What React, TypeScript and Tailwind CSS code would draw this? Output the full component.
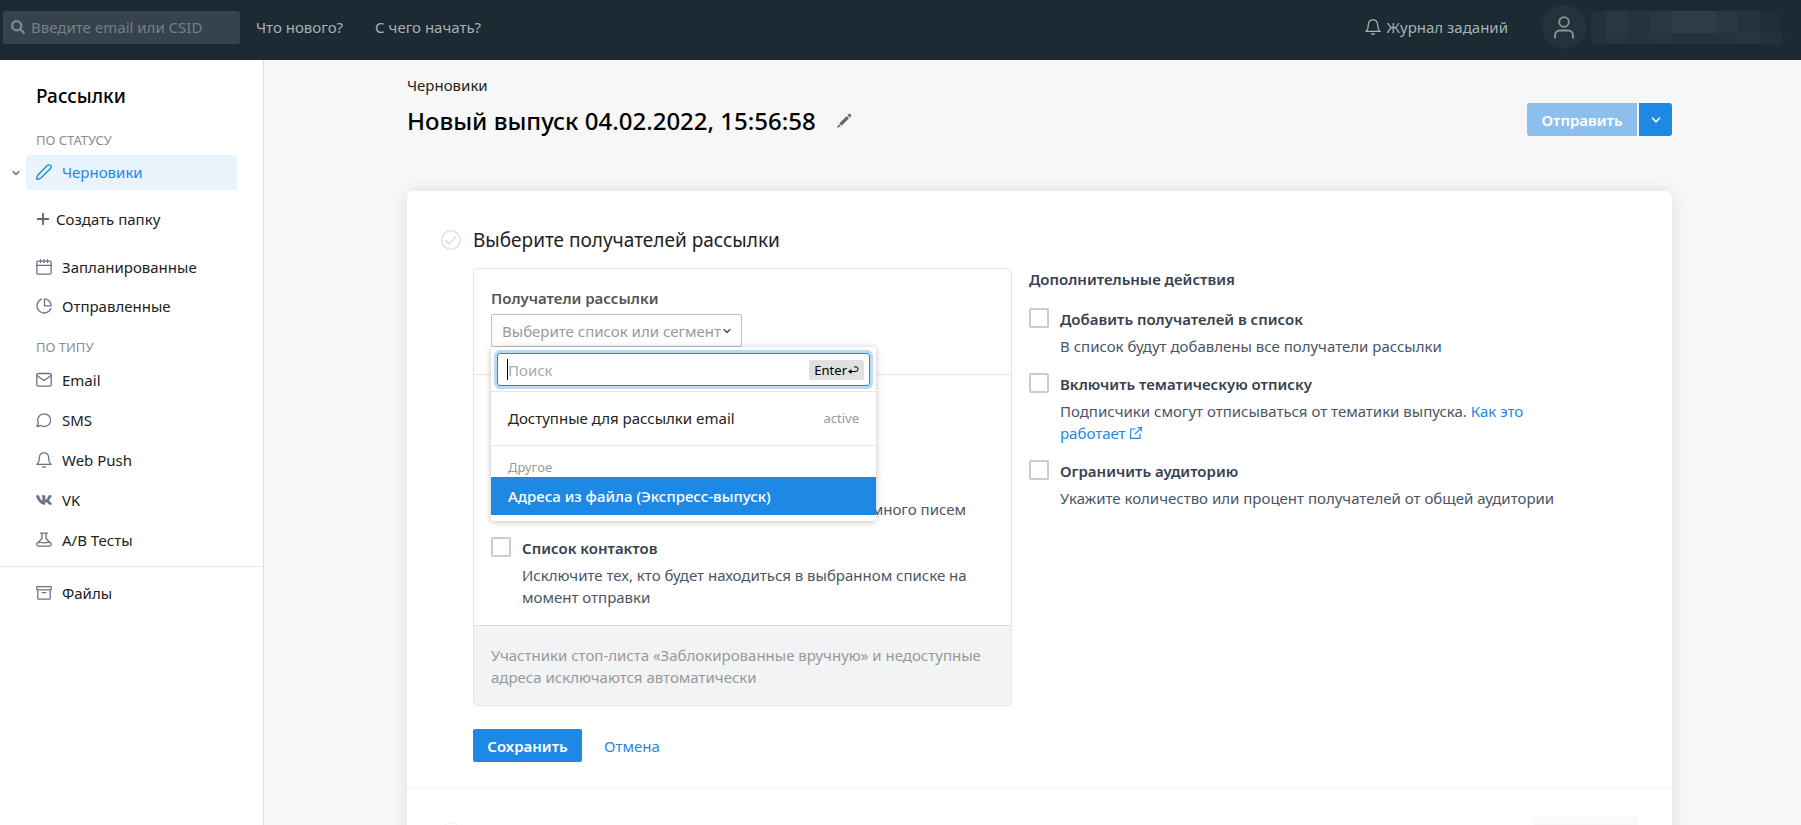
import React from 'react';
import { ChevronDown, Plus } from 'lucide-react';
import { FaSearch } from 'react-icons/fa';

type IconProps = { className?: string };

const svgProps = {
  viewBox: '0 0 16 16',
  fill: 'none',
  stroke: 'currentColor',
  strokeWidth: 1.3,
  strokeLinecap: 'round' as const,
  strokeLinejoin: 'round' as const,
};

const PencilIcon = ({ className }: IconProps) => (
  <svg {...svgProps} strokeWidth={1.4} className={className}>
    <path d="M11.4 1.500a2.100 2.100 0 0 1 3.100 3.100L5.400 13.400c-1.200 1.100-2.800 1.700-4.700 1.800 0-1.900.6-3.500 1.700-4.700z" />
  </svg>
);

const EditIcon = ({ className }: IconProps) => (
  <svg viewBox="0 0 16 16" fill="currentColor" className={className}>
    <path d="M12.400 1.300a1.600 1.600 0 0 1 2.300 2.300l-.9.9-2.300-2.300zM10.700 3l2.300 2.300-7.400 7.400-2.300-2.300zM2.700 11.200l2.100 2.100-3.900 1.800z" />
  </svg>
);

const CalendarIcon = ({ className }: IconProps) => (
  <svg {...svgProps} className={className}>
    <rect x="0.9" y="2.2" width="14.2" height="13" rx="1.2" />
    <path d="M0.900 6.300h14.200M4.500 0.700v2.800M8 0.700v2.800M11.500 0.700v2.800" />
  </svg>
);

const PieIcon = ({ className }: IconProps) => (
  <svg {...svgProps} className={className}>
    <path d="M5.500 1.100a7.200 7.200 0 1 0 9.400 9.400" />
    <path d="M8.500 0.800v7h6.700a7 7 0 0 0-6.700-7z" />
  </svg>
);

const MailIcon = ({ className }: IconProps) => (
  <svg {...svgProps} className={className}>
    <rect x="0.800" y="1.500" width="14.400" height="12.600" rx="1.400" />
    <path d="M1 3.500l7 5 7-5" />
  </svg>
);

const ChatIcon = ({ className }: IconProps) => (
  <svg {...svgProps} className={className}>
    <path d="M1 14.500l1.200-3.800a6.500 6.300 0 1 1 2.500 2.800z" />
  </svg>
);

const BellIcon = ({ className }: IconProps) => (
  <svg {...svgProps} className={className}>
    <path d="M0.900 12.300c1.800-1.100 2.300-2.800 2.400-6.300C3.400 2.800 5.300 0.900 8 0.900s4.600 1.900 4.700 5.100c.1 3.500.6 5.200 2.400 6.300z" />
    <path d="M6.600 14.700c.8.700 2 .7 2.800 0" />
  </svg>
);

const VkIcon = ({ className }: IconProps) => (
  <svg viewBox="16 0 544 512" fill="currentColor" className={className}>
    <path d="M545 117.700c3.700-12.500 0-21.700-17.800-21.700h-58.900c-15 0-21.900 7.900-25.600 16.700 0 0-30 73.100-72.400 120.500-13.700 13.700-20 18.100-27.500 18.100-3.700 0-9.400-4.400-9.400-16.900V117.700c0-15-4.200-21.700-16.600-21.700h-92.600c-9.400 0-15 7-15 13.500 0 14.200 21.200 17.500 23.400 57.500v86.800c0 19-3.400 22.500-10.900 22.500-20 0-68.600-73.400-97.400-157.400-5.800-16.300-11.500-22.900-26.600-22.900H38.800c-16.800 0-20.200 7.900-20.200 16.700 0 15.600 20 93.100 93.100 195.500C160.400 378.100 229 416 291.400 416c37.500 0 42.100-8.400 42.100-22.900 0-66.800-3.400-73.100 15.400-73.100 8.700 0 23.700 4.400 58.700 38.100 40 40 46.600 57.900 69 57.900h58.900c16.800 0 25.300-8.400 20.400-25-11.200-34.900-86.900-106.700-90.300-111.500-8.700-11.200-6.200-16.200 0-26.200.1-.1 72-101.300 79.400-135.600z" />
  </svg>
);

const FlaskIcon = ({ className }: IconProps) => (
  <svg {...svgProps} className={className}>
    <path d="M4.600 1.200h6.800M6 1.200v5.300L1.200 11.200c-1 1.200-.2 2.900 1 2.900h11.600c1.200 0 2-1.700 1-2.900L10 6.500V1.200" />
    <path d="M3.200 10.700c2.300-1.400 4.200.8 6.500 0 1.200-.5 2-.6 3.200-.3" />
  </svg>
);

const ArchiveIcon = ({ className }: IconProps) => (
  <svg {...svgProps} className={className}>
    <rect x="0.800" y="1.600" width="14.400" height="3.200" rx="0.500" />
    <path d="M1.800 4.800v8.500c0 .6.300.9.900.9h10.600c.6 0 .9-.3.900-.9V4.800M6.200 7.600h3.600" />
  </svg>
);

const UserIcon = ({ className }: IconProps) => (
  <svg viewBox="0 0 22 24" fill="none" stroke="currentColor" strokeWidth="1.800" className={className}>
    <circle cx="11" cy="7" r="4.800" />
    <path d="M2 23.500v-3.500a4.500 4.500 0 0 1 4.500-4.500h9a4.500 4.500 0 0 1 4.500 4.500v3.500" />
  </svg>
);

const ExternalIcon = ({ className }: IconProps) => (
  <svg viewBox="0 0 12 12" fill="none" stroke="currentColor" strokeWidth="1.200" className={className}>
    <path d="M5.500 2H.7v9.300H10V6.500M7.500.7h3.800v3.800M11.200.8L4.600 7.400" />
  </svg>
);

const typeItems = [
  { name: 'Email', icon: MailIcon },
  { name: 'SMS', icon: ChatIcon },
  { name: 'Web Push', icon: BellIcon },
  { name: 'VK', icon: VkIcon },
  { name: 'A/B Тесты', icon: FlaskIcon },
];

// Размытое имя аккаунта
const blurTop = ['bg-[#22313b]', 'bg-[#2a3741]', 'bg-[#24333d]', 'bg-[#2a3740]', 'bg-[#2d3e46]', 'bg-[#2d3e46]', 'bg-[#283842]', 'bg-[#23343d]', 'bg-[#1e2e38]', 'bg-[#1b2b34]'];
const blurBottom = ['bg-[#22323b]', 'bg-[#283540]', 'bg-[#24343d]', 'bg-[#273540]', 'bg-[#23343d]', 'bg-[#23343d]', 'bg-[#25353f]', 'bg-[#263540]', 'bg-[#22323c]', 'bg-[#1c2c35]'];

const MenuLink = ({ name, icon: Icon }: { name: string; icon: React.ComponentType<IconProps> }) => (
  <a href="#" className="flex h-9 items-center gap-[10px] pl-9">
    <Icon className="h-4 w-4 text-[#6b7280]" />
    {name}
  </a>
);

const CheckOption = ({ id, title, children }: { id: string; title: string; children: React.ReactNode }) => (
  <div className="flex gap-[11px]">
    <input
      id={id}
      type="checkbox"
      className="h-5 w-5 shrink-0 appearance-none rounded-xs border-2 border-[#cccccc] bg-white"
    />
    <div className="text-[#4b5563]">
      <label htmlFor={id} className="mb-[5px] block font-semibold text-[#374151]">
        {title}
      </label>
      <p>{children}</p>
    </div>
  </div>
);

const App: React.FC = () => {
  return (
    <div className="flex h-screen flex-col overflow-hidden bg-[#f7f7f7] font-['Noto_Sans','Open_Sans',sans-serif] text-[15px] leading-[22px] text-[#222222]">
      {/* Шапка */}
      <header className="flex h-[60px] shrink-0 items-center bg-[#1b2a33] pb-[6px] pl-[3px] pr-[11px] text-[#a9afb3]">
        <div className="flex h-[33px] w-[237px] items-center gap-[6px] rounded-[3px] bg-[#36434d] pl-2">
          <FaSearch className="h-[14px] w-[14px] text-[#7d878d]" />
          <input
            type="text"
            aria-label="Поиск"
            placeholder="Введите email или CSID"
            className="min-w-0 flex-1 bg-transparent outline-none placeholder:text-[#747f86]"
          />
        </div>
        <a href="#" className="ml-4">Что нового?</a>
        <a href="#" className="ml-8">С чего начать?</a>
        <a href="#" className="ml-auto flex items-center gap-[6px]">
          <BellIcon className="h-4 w-4" />
          Журнал заданий
        </a>
        <button type="button" aria-label="Профиль" className="ml-[34px] flex h-11 w-11 items-center justify-center rounded-full bg-[#23323b] text-[#8d969b]">
          <UserIcon className="h-6 w-[22px]" />
        </button>
        <div className="ml-[5px]">
          <div className="flex h-[22px]">
            {blurTop.map((color, i) => (
              <div key={i} className={`${color} w-[22px] first:w-[15px] last:w-2`} />
            ))}
          </div>
          <div className="flex h-[11px]">
            {blurBottom.map((color, i) => (
              <div key={i} className={`${color} w-[22px] first:w-[15px] last:w-2`} />
            ))}
          </div>
        </div>
      </header>

      <div className="flex min-h-0 flex-1">
        {/* Боковое меню */}
        <aside className="w-[264px] shrink-0 border-r border-[#dddddd] bg-white">
          <h2 className="pl-9 pt-6 text-[19px] font-medium leading-6 text-black">Рассылки</h2>
          <p className="pl-9 pt-[21px] text-[13px] text-[#8c8c8c]">ПО СТАТУСУ</p>
          <div className="mt-1 flex items-center pr-[26px]">
            <button type="button" aria-label="Свернуть" className="flex w-[26px] justify-center pl-[6px] text-[#6b7280]">
              <ChevronDown className="h-3 w-3" strokeWidth={3} />
            </button>
            <a href="#" className="flex h-[35px] flex-1 items-center gap-[10px] rounded-[3px] bg-[#e8f3fc] pb-px pl-[10px] text-[#1e88e5]">
              <PencilIcon className="h-4 w-4" />
              Черновики
            </a>
          </div>
          <button type="button" className="mt-[11px] flex h-9 items-center gap-1 pl-[34px]">
            <Plus className="h-[18px] w-[18px] text-[#666666]" strokeWidth={2.5} />
            Создать папку
          </button>
          <nav className="mt-3 flex flex-col gap-[3px]">
            <MenuLink name="Запланированные" icon={CalendarIcon} />
            <MenuLink name="Отправленные" icon={PieIcon} />
          </nav>
          <p className="pl-9 pt-3 text-[13px] text-[#8c8c8c]">ПО ТИПУ</p>
          <nav className="mt-1 flex flex-col gap-1">
            {typeItems.map((item) => (
              <MenuLink key={item.name} name={item.name} icon={item.icon} />
            ))}
          </nav>
          <nav className="mt-2 border-t border-[#e5e5e5] pt-2">
            <MenuLink name="Файлы" icon={ArchiveIcon} />
          </nav>
        </aside>

        {/* Содержимое */}
        <main className="min-w-0 flex-1 overflow-hidden pl-[14px]">
          <div className="mx-auto flex h-full max-w-[1265px] flex-col">
            <div className="flex items-start justify-between pt-[15px]">
              <div>
                <a href="#" className="block leading-5">Черновики</a>
                <div className="mt-[10px] flex items-center gap-5">
                  <h1 className="text-2xl font-medium leading-8 text-black">Новый выпуск 04.02.2022, 15:56:58</h1>
                  <button type="button" aria-label="Переименовать" className="text-[#666666]">
                    <EditIcon className="h-4 w-4" />
                  </button>
                </div>
              </div>
              <div className="mt-7 flex gap-[2px]">
                <button type="button" disabled className="h-[33px] w-[110px] rounded-l-[3px] bg-[#8cbfee] font-semibold text-white">
                  Отправить
                </button>
                <button type="button" aria-label="Ещё" className="flex h-[33px] w-[33px] items-center justify-center rounded-r-[3px] bg-[#1e88e5] text-white">
                  <ChevronDown className="h-[14px] w-[14px]" strokeWidth={3} />
                </button>
              </div>
            </div>

            <section className="mt-[54px] flex-1 rounded-t-md bg-white shadow-[0_0_16px_rgba(0,0,0,0.1)]">
              <div className="border-b border-[#f5f5f5] px-[34px] pb-[26px] pt-9">
                <div className="flex items-center gap-3">
                  <svg viewBox="0 0 20 20" fill="none" stroke="#dddddd" strokeWidth="1.300" className="h-5 w-5">
                    <circle cx="10" cy="10" r="9.300" />
                    <path d="M4.500 10l3.500 4 7.500-8" />
                  </svg>
                  <h2 className="text-[19px] leading-[26px]">Выберите получателей рассылки</h2>
                </div>

                <div className="mt-[15px] flex gap-[17px] pl-8">
                  <div className="w-[539px] shrink-0 rounded-[5px] border border-[#e2e4e6]">
                    <div className="relative px-[17px] pb-[27px] pt-[18px]">
                      <label id="recipients" className="block font-semibold text-[#555555]">Получатели рассылки</label>
                      <button
                        type="button"
                        aria-labelledby="recipients"
                        className="mt-[5px] flex h-[33px] w-[251px] items-center justify-between whitespace-nowrap rounded-xs border border-[#bfbfbf] pl-[10px] pr-2 text-[#999999]"
                      >
                        Выберите список или сегмент
                        <ChevronDown className="h-3 w-3 shrink-0 text-[#555555]" strokeWidth={3} />
                      </button>

                      {/* Выпадающий список */}
                      <div className="absolute left-[17px] top-full z-10 -mt-[27px] w-[385px] rounded-[3px] bg-white pb-[6px] shadow-[0_1px_6px_rgba(0,0,0,0.25)]">
                        <div className="border-b border-[#e8e8e8] p-[6px] pb-[5px]">
                          <div className="flex h-[33px] items-center rounded-[3px] border border-[#1e88e5] pl-[9px] pr-[5px] ring-3 ring-[#bbdaf6]">
                            <span className="h-[21px] w-px bg-black" />
                            <input
                              type="text"
                              aria-label="Поиск по спискам"
                              placeholder="Поиск"
                              className="min-w-0 flex-1 outline-none placeholder:text-[#aaaaaa]"
                            />
                            <kbd className="flex h-5 items-center rounded-xs bg-[#e0e0e0] px-[5px] font-['Noto_Sans','Open_Sans',sans-serif] text-[13px] text-black">
                              Enter
                              <svg viewBox="0 0 12 10" fill="none" stroke="currentColor" className="h-[10px] w-3">
                                <path d="M2 6.500h7a2 2.300 0 0 0 0-4.600H7" />
                                <path d="M4.500 4L1 6.500 4.500 9z" fill="currentColor" stroke="none" />
                              </svg>
                            </kbd>
                          </div>
                        </div>
                        <button type="button" className="flex h-[54px] w-full items-center justify-between border-b border-[#e8e8e8] px-[17px] pb-[2px]">
                          Доступные для рассылки email
                          <span className="text-[13px] text-[#999999]">active</span>
                        </button>
                        <p className="pl-[17px] pt-[11px] text-[13px] leading-5 text-[#999999]">Другое</p>
                        <button type="button" className="flex h-[38px] w-full items-center bg-[#1e88e5] px-[17px] font-medium text-white">
                          Адреса из файла (Экспресс-выпуск)
                        </button>
                      </div>
                    </div>

                    <div className="border-t border-[#e2e4e6] px-[17px] pb-[17px] pt-[123px]">
                      <p className="mb-[17px] pr-7 text-right text-[#4b5563]">много писем</p>
                      <CheckOption id="contacts" title="Список контактов">
                        Исключите тех, кто будет находиться в выбранном списке на момент отправки
                      </CheckOption>
                    </div>

                    <div className="rounded-b-[5px] border-t border-[#d9dcde] bg-[#f1f3f5] px-[17px] pb-[17px] pt-[18px] text-[#999999]">
                      Участники стоп-листа «Заблокированные вручную» и недоступные адреса исключаются автоматически
                    </div>
                  </div>

                  <div className="w-[530px]">
                    <h3 className="mb-[18px] font-semibold text-[#374151]">Дополнительные действия</h3>
                    <div className="flex flex-col gap-4">
                      <CheckOption id="add" title="Добавить получателей в список">
                        В список будут добавлены все получатели рассылки
                      </CheckOption>
                      <CheckOption id="unsubscribe" title="Включить тематическую отписку">
                        Подписчики смогут отписываться от тематики выпуска.{' '}
                        <a href="#" className="text-[#1e88e5]">
                          Как это <br />
                          работает <ExternalIcon className="ml-px inline h-3 w-3 align-baseline" />
                        </a>
                      </CheckOption>
                      <CheckOption id="limit" title="Ограничить аудиторию">
                        Укажите количество или процент получателей от общей аудитории
                      </CheckOption>
                    </div>
                  </div>
                </div>

                <div className="mt-[23px] flex items-center gap-[22px] pl-8">
                  <button type="button" className="h-[33px] w-[109px] rounded-xs bg-[#1e88e5] font-semibold text-white">
                    Сохранить
                  </button>
                  <a href="#" className="text-[#1e88e5]">Отмена</a>
                </div>
              </div>

              {/* Следующий шаг */}
              <div className="flex items-start justify-between px-[34px] pt-7">
                <div className="mt-[5px] h-5 w-5 rounded-full border border-[#f3f3f3]" />
                <div className="h-[33px] w-[105px] rounded-[3px] bg-[#f9f9f9]" />
              </div>
            </section>
          </div>
        </main>
      </div>
    </div>
  );
};

export default App;
